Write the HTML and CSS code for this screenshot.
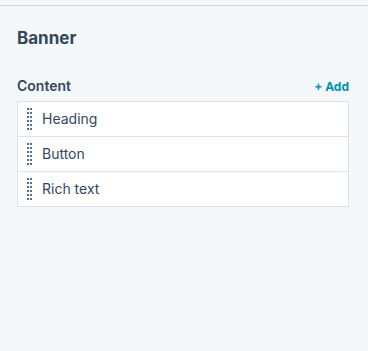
FILE: index.html
```html
<!DOCTYPE html>
<html>
<head>
<meta charset="utf-8">
<link rel="stylesheet" href="styles.css">
</head>
<body>
<div class="topbar"></div>
<main class="panel">
  <h2 class="title">Banner</h2>
  <section class="group">
    <div class="group-head">
      <span class="group-label">Content</span>
      <a class="add" href="#">+ Add</a>
    </div>
    <ul class="list">
      <li class="item">
        <svg class="grip" width="5" height="22" viewBox="0 0 5 22"><g fill="#516f90"><rect x="0" y="0" width="2" height="2"/><rect x="3" y="0" width="2" height="2"/><rect x="0" y="4" width="2" height="2"/><rect x="3" y="4" width="2" height="2"/><rect x="0" y="8" width="2" height="2"/><rect x="3" y="8" width="2" height="2"/><rect x="0" y="12" width="2" height="2"/><rect x="3" y="12" width="2" height="2"/><rect x="0" y="16" width="2" height="2"/><rect x="3" y="16" width="2" height="2"/><rect x="0" y="20" width="2" height="2"/><rect x="3" y="20" width="2" height="2"/></g></svg>
        <span class="item-label">Heading</span>
      </li>
      <li class="item">
        <svg class="grip" width="5" height="22" viewBox="0 0 5 22"><g fill="#516f90"><rect x="0" y="0" width="2" height="2"/><rect x="3" y="0" width="2" height="2"/><rect x="0" y="4" width="2" height="2"/><rect x="3" y="4" width="2" height="2"/><rect x="0" y="8" width="2" height="2"/><rect x="3" y="8" width="2" height="2"/><rect x="0" y="12" width="2" height="2"/><rect x="3" y="12" width="2" height="2"/><rect x="0" y="16" width="2" height="2"/><rect x="3" y="16" width="2" height="2"/><rect x="0" y="20" width="2" height="2"/><rect x="3" y="20" width="2" height="2"/></g></svg>
        <span class="item-label">Button</span>
      </li>
      <li class="item">
        <svg class="grip" width="5" height="22" viewBox="0 0 5 22"><g fill="#516f90"><rect x="0" y="0" width="2" height="2"/><rect x="3" y="0" width="2" height="2"/><rect x="0" y="4" width="2" height="2"/><rect x="3" y="4" width="2" height="2"/><rect x="0" y="8" width="2" height="2"/><rect x="3" y="8" width="2" height="2"/><rect x="0" y="12" width="2" height="2"/><rect x="3" y="12" width="2" height="2"/><rect x="0" y="16" width="2" height="2"/><rect x="3" y="16" width="2" height="2"/><rect x="0" y="20" width="2" height="2"/><rect x="3" y="20" width="2" height="2"/></g></svg>
        <span class="item-label">Rich text</span>
      </li>
    </ul>
  </section>
</main>
</body>
</html>
```
FILE: styles.css
```css
* { box-sizing: border-box; }
html, body {
  margin: 0;
  padding: 0;
  height: 100%;
  background: #f5f8fa;
  font-family: Inter, "Noto Sans", sans-serif;
  color: #33475b;
}
.topbar {
  height: 6px;
  border-bottom: 1px solid #cbd6e2;
}
.panel {
  padding: 0 19px 0 17px;
}
.title {
  margin: 0;
  padding-top: 22px;
  font-size: 17px;
  line-height: 20px;
  font-weight: 700;
}
.group {
  margin-top: 29px;
}
.group-head {
  display: flex;
  justify-content: space-between;
  align-items: baseline;
  height: 17px;
  margin-bottom: 7px;
}
.group-label {
  font-size: 14px;
  line-height: 17px;
  font-weight: 600;
}
.add {
  font-size: 12px;
  font-weight: 700;
  color: #0091ae;
  text-decoration: none;
  line-height: 17px;
}
.list {
  list-style: none;
  margin: 0;
  padding: 0;
  background: #fff;
  border: 1px solid #dfe3eb;
}
.item {
  display: flex;
  align-items: center;
  height: 35px;
  padding-left: 9px;
  border-top: 1px solid #dfe3eb;
}
.item:first-child {
  border-top: none;
  height: 34px;
}
.grip {
  display: block;
  flex: none;
}
.item-label {
  margin-left: 10px;
  font-size: 14px;
  line-height: 20px;
}
```
